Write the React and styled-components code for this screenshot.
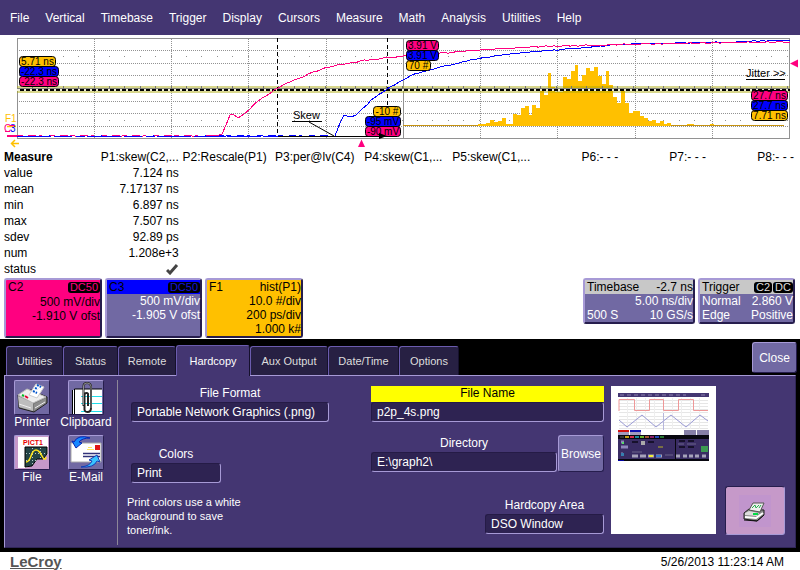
import React from "react";
import styled, { createGlobalStyle } from "styled-components";

const c = {
  purple: "#443672",
  button: "#7169a3",
  light: "#a79ad6",
  edge: "#261d4d",
  field: "#2e2352",
  tab: "#272043",
  pink: "#ff0080",
  blue: "#0000ff",
  gold: "#ffc000",
};

const Global = createGlobalStyle`
  * { box-sizing: border-box; }
  body { margin: 0; background: #fff; color: #000; font: 12px/14px "Liberation Sans", Arial, sans-serif; }
  button, input, select { font: inherit; color: inherit; margin: 0; }
`;

const MenuBar = styled.nav`
  display: flex;
  gap: 16px;
  align-items: center;
  height: 35px;
  padding: 0 10px;
  background: ${c.purple};
`;

const MenuItem = styled.button`
  padding: 0;
  border: 0;
  background: none;
  color: #fff;
`;

const Scope = styled.svg`
  display: block;
  width: 100%;
  height: auto;
  font: 10px "Liberation Sans", Arial, sans-serif;
`;

const MeasureWrap = styled.div`
  padding: 0 6px 0 4px;
  margin-top: -1px;
`;

const MeasureTable = styled.table`
  width: 100%;
  border-collapse: collapse;
  table-layout: fixed;

  th, td {
    height: 16px;
    padding: 0;
    line-height: 16px;
    font-weight: normal;
    text-align: right;
    white-space: nowrap;
  }
  th:first-child { text-align: left; }
  thead th:first-child { font-weight: bold; }
  svg { display: block; margin-left: auto; }
`;

const Descriptors = styled.div`
  display: flex;
  align-items: flex-start;
  gap: 3px;
  padding: 1px 5px 1px 4px;
`;

const Spacer = styled.div`
  flex: 1;
`;

const Box = styled.section`
  width: ${(p) => p.$w}px;
  min-height: ${(p) => p.$h}px;
  border: 2px solid;
  border-color: ${c.light} ${c.edge} ${c.edge} ${c.light};
  border-radius: 3px;
  background: ${(p) => p.$bg};
  color: ${(p) => p.$fg || "#000"};
  line-height: 14px;
`;

const BoxHead = styled.header`
  display: flex;
  align-items: center;
  height: 14px;
  padding: 0 0 0 2px;
  background: ${(p) => p.$bg || "transparent"};
  color: #000;
  margin-bottom: ${(p) => p.$gap || 0}px;

  span:first-child { flex: 1; }
`;

const BoxRow = styled.div`
  display: flex;
  justify-content: space-between;
  padding-left: 2px;
  white-space: nowrap;
`;

const Coupling = styled.b`
  margin-left: 1px;
  padding: 0 2px;
  border-radius: 3px;
  background: #000;
  color: ${(p) => p.$fg || "#ddd"};
  font-size: 11px;
  line-height: 11px;
  font-weight: normal;
`;

const Dialog = styled.main`
  padding: 3px 4px 4px;
  background: #000;
  color: #fff;
`;

const TabRow = styled.div`
  display: flex;
  align-items: flex-end;
  height: 33px;
  padding-left: 2px;
`;

const Tab = styled.button`
  position: relative;
  width: ${(p) => p.$w}px;
  height: ${(p) => (p["aria-selected"] ? 31 : 29)}px;
  margin-bottom: ${(p) => (p["aria-selected"] ? -1 : 0)}px;
  padding: 0 0 ${(p) => (p["aria-selected"] ? 1 : 0)}px;
  border: 1px solid #6b5cae;
  border-width: 1px 1px 0;
  border-right-color: #15102c;
  border-radius: 3px 3px 0 0;
  background: ${(p) => (p["aria-selected"] ? c.purple : c.tab)};
  color: ${(p) => (p["aria-selected"] ? "#fff" : "#ddd")};
  font-size: 11px;
`;

const PushButton = styled.button`
  display: flex;
  align-items: center;
  justify-content: center;
  width: ${(p) => p.$w}px;
  height: ${(p) => p.$h}px;
  padding: 0;
  border: 1px solid;
  border-color: ${(p) => (p.$lit ? `${c.edge} ${c.light} ${c.light} ${c.edge}` : `${c.light} ${c.edge} ${c.edge} ${c.light}`)};
  border-radius: 3px;
  background: ${(p) => (p.$lit ? "#c699c9" : c.button)};
  color: #fff;
`;

const CloseSlot = styled.div`
  align-self: flex-start;
  margin-left: auto;
  margin-right: -1px;
`;

const Panel = styled.div`
  display: flex;
  border: 1px solid ${c.light};
  border-right-color: #302657;
  border-bottom-color: #302657;
  background: ${c.purple};
`;

const Targets = styled.div`
  display: grid;
  grid-template-columns: 54px 54px;
  align-content: start;
  row-gap: 5px;
  width: 113px;
  margin: 4px 0 2px;
  border-right: 1px solid #8d8798;
`;

const Target = styled.button`
  display: flex;
  flex-direction: column;
  align-items: center;
  height: 50px;
  padding: 0;
  border: 0;
  background: none;
  color: #fff;
`;

const TargetFace = styled.span`
  width: 36px;
  height: 35px;
  border: 1px solid;
  border-color: ${c.light} ${c.edge} ${c.edge} ${c.light};
  border-radius: 2px;
  background: ${(p) => (p.$on ? "#c699c9" : c.button)};

  svg { display: block; }
`;

const Column = styled.div`
  display: flex;
  flex-direction: column;
  padding-top: 10px;
`;

const FormatColumn = styled(Column)`
  width: 198px;
  margin: 0 42px 0 13px;
`;

const FileColumn = styled(Column)`
  flex: 1;
  min-width: 180px;
`;

const Field = styled.div`
  display: flex;
  flex-direction: column;
  width: ${(p) => (p.$w ? `${p.$w}px` : "auto")};
  flex: ${(p) => (p.$grow ? 1 : "none")};
  margin-top: ${(p) => p.$top || 0}px;
  align-self: ${(p) => (p.$end ? "flex-end" : "auto")};
`;

const FieldLabel = styled.label`
  height: 16px;
  line-height: 15px;
  text-align: center;
  background: ${(p) => (p.$on ? "#ffff00" : "transparent")};
  color: ${(p) => (p.$on ? "#000" : "#fff")};
`;

const fieldBox = `
  width: 100%;
  height: 20px;
  padding: 0 5px 1px;
  border: 1px solid;
  border-radius: 3px;
  appearance: none;
  outline: none;
`;

const TextInput = styled.input`
  ${fieldBox}
  border-color: #251b46 ${c.light} ${c.light} #251b46;
  background: ${c.field};
`;

const Drop = styled.select`
  ${fieldBox}
  border-color: #251b46 ${c.light} ${c.light} #251b46;
  background: ${c.field};
`;

const DirectoryRow = styled.div`
  display: flex;
  align-items: flex-end;
  gap: 1px;
  margin-top: 13px;
`;

const Note = styled.p`
  width: 140px;
  margin: 12px 0 0 -4px;
  font-size: 11px;
  line-height: 14px;
`;

const Preview = styled.figure`
  width: 105px;
  height: 148px;
  margin: 10px 0 0 7px;
  padding: 7px;
  background: #fff;

  svg { display: block; }
`;

const PrintSlot = styled.div`
  padding-top: 110px;
  margin: 0 10px 12px 9px;
`;

const Footer = styled.footer`
  display: flex;
  justify-content: space-between;
  align-items: center;
  padding: 0 16px 0 10px;
  height: 19px;
`;

const Brand = styled.b`
  color: #555;
  font-size: 15px;
  line-height: 16px;
  text-decoration: underline;
`;

const jitter = (i) => ((i * 7919) % 13) / 13 - 0.5;

function trace(points, noise) {
  const out = [];
  points.forEach(([x, y], i) => {
    out.push(`${x},${y}`);
    const next = points[i + 1];
    if (!next) return;
    for (let px = x + 4; px < next[0] - 2; px += 4) {
      const base = y + ((next[1] - y) * (px - x)) / (next[0] - x);
      out.push(`${px},${(base + jitter(px) * noise).toFixed(1)}`);
    }
  });
  return out.join(" ");
}

const pinkTrace = trace([[17, 136], [215, 136], [222, 134], [226, 125], [230, 115], [233, 114], [238, 118], [244, 114], [250, 109], [258, 101], [266, 96], [278, 88], [290, 82], [300, 78], [313, 72], [330, 67], [345, 64], [360, 61], [387, 58], [403, 56], [440, 53], [460, 52], [480, 50], [500, 49], [530, 47], [600, 45], [650, 44], [700, 43], [790, 42]], 1.4);
const blueTrace = trace([[17, 136], [335, 136], [340, 123], [344, 115], [351, 117], [356, 115], [362, 109], [368, 104], [371, 100], [387, 89], [403, 80], [412, 75], [430, 70], [440, 67], [455, 64], [470, 60], [490, 57], [510, 54], [530, 52], [570, 49], [600, 46], [625, 44], [680, 43], [730, 42], [790, 40]], 1);

const bars = [
  [478, 124], [486, 123], [490, 120], [494, 122], [498, 121], [502, 118], [506, 124], [513, 114], [517, 115], [521, 108], [525, 106], [529, 115],
  [532, 105], [536, 108], [540, 90], [544, 95], [548, 73], [551, 87], [555, 92], [563, 77], [567, 79], [571, 71], [575, 65], [578, 81], [582, 75],
  [586, 68], [590, 71], [594, 67], [598, 76], [602, 84], [606, 71], [609, 85], [613, 97], [617, 103], [621, 91], [625, 103], [629, 113],
  [633, 111], [640, 116], [644, 118], [648, 121], [652, 120], [656, 123], [660, 121], [664, 124], [667, 123], [671, 126],
];
const histogram = `M478 126${bars.map(([x, y], i) => `V${y}H${bars[i + 1] ? bars[i + 1][0] : 671}`).join("")}Z`;

function Tag({ x, y, w, fill, children }) {
  return (
    <g>
      <rect x={x + 0.5} y={y + 0.5} width={w - 1} height="10" rx="3" fill={fill} stroke="#000" />
      <text x={x + w / 2} y={y + 9} textAnchor="middle">{children}</text>
    </g>
  );
}

function ScopeGrid() {
  const columns = [94, 171, 248, 326, 480, 557, 635, 712];
  const rows = [50, 63, 75, 101, 113, 126];
  return (
    <Scope viewBox="0 35 800 115" role="img" aria-label="Waveform grid">
      <g shapeRendering="crispEdges">
        <rect x="17.5" y="38.5" width="772" height="100" fill="none" stroke="#929292" />
        <path d="M403.5 39V138" stroke="#929292" />
        {columns.map((x) => <path key={x} d={`M${x}.5 39V138`} stroke="#929292" strokeDasharray="1 1" />)}
        {rows.map((y) => <path key={y} d={`M19 ${y}.5H789`} stroke="#929292" strokeDasharray="1 1" />)}
        <path d="M32 56.5H789M32 120.5H789" stroke="#929292" strokeDasharray="1 14.4" />
        <path d="M403 125.5H784" stroke="#c69210" />
        <path d={histogram} fill={c.gold} />
        <path d="M687 124.5H694M710 124.5H714" stroke={c.gold} />
        <path d="M17 87H790M17 92H790" stroke="#a8a600" strokeOpacity=".45" strokeWidth="2" />
        <path d="M17 88.5H790" stroke="#85857d" />
        <path d="M32 87.5H789" stroke="#777" strokeWidth="3" strokeDasharray="1 14.4" />
        <path d="M17 90H790" stroke="#f1f1d9" strokeWidth="2" />
        <path d="M20 90H790" stroke="#000" strokeWidth="2" strokeDasharray="4 2" />
        <path d="M277.5 38V136M387.5 38V136" stroke="#000" strokeDasharray="4 3" />
        <polyline points={blueTrace} fill="none" stroke={c.blue} />
        <polyline points={pinkTrace} fill="none" stroke={c.pink} />
        <path d="M17 136.5H333" stroke={c.blue} strokeDasharray="34 3 18 4 9 2" />
      </g>
      <Tag x={19} y={56} w={37} fill={c.gold}>5.71 ns</Tag>
      <Tag x={19} y={66} w={40} fill={c.blue}>-22.3 ns</Tag>
      <Tag x={19} y={76} w={40} fill={c.pink}>-22.3 ns</Tag>
      <Tag x={406} y={40} w={33} fill={c.pink}>3.91 V</Tag>
      <Tag x={406} y={50} w={33} fill={c.blue}>3.91 V</Tag>
      <Tag x={406} y={60} w={25} fill={c.gold}>70 #</Tag>
      <Tag x={373} y={106} w={28} fill={c.gold}>-10 #</Tag>
      <Tag x={365} y={116} w={36} fill={c.blue}>-95 mV</Tag>
      <Tag x={365} y={126} w={36} fill={c.pink}>-90 mV</Tag>
      <Tag x={751} y={90} w={37} fill={c.pink}>27.7 ns</Tag>
      <Tag x={751} y={100} w={37} fill={c.blue}>27.7 ns</Tag>
      <Tag x={751} y={110} w={37} fill={c.gold}>7.71 ns</Tag>
      <text x="293" y="119" fontSize="11">Skew</text>
      <path d="M292 121.5H322M309 122L334 136M278 136.5H382" fill="none" stroke="#000" />
      <path d="M379 133V139L387 136Z" />
      <text x="746" y="77" fontSize="11">Jitter &gt;&gt;</text>
      <path d="M746 79.5H785" stroke="#000" />
      <path d="M358 147L361.500 139.500L365 147Z" fill={c.pink} />
      <path d="M790 63.500L798 59.500V67.500Z" fill={c.pink} />
      <text x="5" y="122" fill={c.gold}>F1</text>
      <path d="M7 126.500H16M19 143.500H11M15 140L11.500 143.500L15 147" fill="none" stroke={c.gold} strokeWidth="1.500" />
      <text x="4" y="132" fill={c.pink}>C</text>
      <text x="10" y="132" fill={c.blue}>3</text>
      <path d="M10 125.500H15M5 131.500H10" stroke={c.pink} />
      <path d="M7 136H17" stroke={c.pink} strokeWidth="2" />
    </Scope>
  );
}

function PrinterIcon() {
  return (
    <svg width="34" height="33" viewBox="0 0 34 33" aria-hidden="true">
      <path d="M3 14L16 9L32 16V22L19 31L4 27Z" fill="#777" stroke="#222" />
      <path d="M3 14L12 8L31 16L18 22Z" fill="#eee" stroke="#bbb" />
      <path d="M14 14L21 3L29 6L22 17Z" fill="#fff" stroke="#ccc" />
      <path d="M20 7L23 8M22 4L26 6M18 10L22 12" stroke="#0055cc" strokeWidth="2" strokeDasharray="2 1" />
      <path d="M3 15L18 22V30L4 26Z" fill="#bdbdbd" />
      <path d="M19 23L31 17V22L19 30Z" fill="#8d8d8d" />
      <path d="M4 23L16 27M20 27L30 21" stroke="#eee" />
      <path d="M7 14L9 15" stroke="#00ba22" strokeWidth="2" />
      <path d="M10 15L13 17" stroke="#e00030" strokeWidth="2" />
    </svg>
  );
}

function ClipboardIcon() {
  return (
    <svg width="34" height="33" viewBox="0 0 34 33" aria-hidden="true">
      <path d="M3 9H5V8H33V33H3Z" fill="#fff" />
      <path d="M3.500 33V9M5.500 33V8H33" fill="none" stroke="#000" />
      <path d="M12 15.500H33M12 22.500H33M12 30.500H33" stroke="#20ddeb" />
      <path d="M14.500 25V5Q14.500 2 18 2T22 5V27Q22 31 18.500 31T15.500 27V14Q15.500 12 17.500 12T19 14V25" fill="none" stroke="#222" strokeWidth="2" />
      <path d="M14.500 24V5Q14.500 2 18 2T22 5V27" fill="none" stroke="#aaa" strokeWidth=".8" />
    </svg>
  );
}

function PictureIcon() {
  return (
    <svg width="34" height="33" viewBox="0 0 34 33" aria-hidden="true">
      <path d="M3 1H33V18L28 22L23 23L17 30L10 32H3Z" fill="#fff" />
      <path d="M10 11H32V18L28 23L22 23L17 30L10 31Z" fill="#244445" stroke="#000" />
      <path d="M17.500 12V29M25.500 12V23M11 17.500H31M11 24.500H23" stroke="#b4caca" strokeDasharray="1 2" />
      <path d="M11 26Q14 26 16 20T21 14T27 20T31 21" fill="none" stroke="#ffe51a" strokeWidth="1.500" />
      <text x="18" y="9" fill="#e60000" fontFamily="Liberation Sans" fontWeight="bold" fontSize="7" textAnchor="middle">PICT1</text>
    </svg>
  );
}

function MailIcon() {
  return (
    <svg width="34" height="33" viewBox="0 0 34 33" aria-hidden="true">
      <path d="M2 7H32V26H2Z" fill="#fff" stroke="#aaa" />
      <rect x="26" y="9" width="5" height="5" fill="#e01515" />
      <path d="M19 11.500H23M18 13.500H25" stroke="#ffe760" />
      <path d="M14 17.500H31M14 20.500H31" stroke="#31337b" strokeWidth="1.500" />
      <path d="M3 5L7 12L13 7L10 6Q13 2 21 2Q9 -2 5 6Z" fill="#1688ff" stroke="#0824b3" />
      <path d="M20 24L28 19L31 26L28 25Q25 32 12 31Q21 30 23 25Z" fill="#39c4ff" stroke="#143bb5" />
    </svg>
  );
}

function PrintNowIcon() {
  return (
    <svg width="32" height="32" viewBox="0 0 32 32" aria-hidden="true">
      <rect width="32" height="32" fill="#c195cd" />
      <path d="M5 18L10 14L25 15V20L18 26L5 24Z" fill="#888" stroke="#222" />
      <path d="M10 15L14 8H25L21 17Z" fill="#eee" stroke="#555" />
      <path d="M13 13L16 10L17 13L20 10M20 13L22 10" fill="none" stroke="#27ae50" />
      <path d="M6 18L10 16L20 18L18 21L6 20Z" fill="#ddd" />
      <path d="M6 22L17 23L24 18" fill="none" stroke="#fff" strokeWidth="2" />
      <path d="M14 19H19" stroke="#00dc45" strokeWidth="2" />
      <path d="M5 25L18 26L25 20" fill="none" stroke="#111" />
    </svg>
  );
}

function Thumbnail() {
  const chips = ["#333", "#c6a316", "#d62c4e", "#198999", "#6ab22d", "#a25531", "#8b1e68", "#2448b8", "#277532"];
  return (
    <svg width="91" height="68" viewBox="0 0 91 68" role="img" aria-label="Hardcopy preview">
      <rect width="91" height="68" fill="#fff" />
      <rect width="91" height="4" fill="#443672" />
      <path d="M2 2H68M83 2H90" stroke="#8b80ad" strokeDasharray="4 3" />
      {[7, 10, 13, 16, 19, 23, 26, 29, 32, 35].map((y) => <path key={y} d={`M1 ${y}.5H90`} stroke="#e6e6e6" />)}
      {[9, 18, 27, 36, 45, 54, 63, 72, 81].map((x) => <path key={x} d={`M${x}.5 5V36`} stroke="#eee" />)}
      <path d="M1 18V6.500H16.500V17.500H31.500V6.500H45.500V17.500H60.500V6.500H75.500V17.500H90" fill="none" stroke="#ee9898" />
      <path d="M1 27L9 34L24 22L38 34L53 22L68 34L82 22L90 28" fill="none" stroke="#9b9bd6" />
      <path d="M45.500 20V37" stroke="#b6b6dc" />
      <rect y="37" width="11" height="2" fill="#d31212" />
      <rect x="12" y="37" width="11" height="2" fill="#1111b0" />
      <path d="M0 39H11V42H0ZM12 39H23V42H12Z" fill="#a39bbf" />
      <path d="M66 37H78V42H66ZM79 37H91V42H79Z" fill="#8780a8" />
      <rect y="42" width="91" height="26" fill="#080710" />
      <rect y="46" width="57" height="20" fill="#392c63" />
      <rect x="58" y="46" width="33" height="20" fill="#392c63" />
      {chips.map((fill, i) => <rect key={fill} x={2 + i * 5} y="43" width="4" height="2" fill={fill} />)}
      <path d="M14 49H20M30 49H36M61 48H67M70 48H76M61 54H67M70 54H76" stroke="#17112c" strokeWidth="2" />
      <path d="M60 51H66M69 51H78M14 59H24M47 62H55" stroke="#6d648c" />
      <rect x="23" y="48" width="4" height="4" fill="#aaa" />
      <path d="M3 49H6M3 54H10M3 61H5" stroke="#8f86bb" strokeWidth="3" />
      <rect x="4" y="49" width="2" height="2" fill="#55dd69" />
      <rect x="3" y="60" width="3" height="3" fill="#367fb0" />
      <path d="M14 63H20M22 63H28M30 63H36M38 63H44M58 63H62M65 63H69M71 63H75M77 63H81M84 63H88" stroke="#a6a2ba" strokeWidth="3" />
      <rect x="31" y="62" width="4" height="2" fill="#f0ed35" />
      <rect x="38" y="62" width="5" height="2" fill="#3478d2" />
      <path d="M40 54H45" stroke="#b9b127" />
      <rect x="83" y="53" width="7" height="6" fill="#3c9952" />
      <rect y="67" width="6" height="1" fill="#0000a0" />
    </svg>
  );
}

const measures = [
  ["value", "7.124 ns"], ["mean", "7.17137 ns"], ["min", "6.897 ns"], ["max", "7.507 ns"],
  ["sdev", "92.89 ps"], ["num", "1.208e+3"],
];
const headings = ["P1:skew(C2,...", "P2:Rescale(P1)", "P3:per@lv(C4)", "P4:skew(C1,...", "P5:skew(C1,...", "P6:- - -", "P7:- - -", "P8:- - -"];
const menus = ["File", "Vertical", "Timebase", "Trigger", "Display", "Cursors", "Measure", "Math", "Analysis", "Utilities", "Help"];
const tabs = [["Utilities", 57], ["Status", 55], ["Remote", 58], ["Hardcopy", 74], ["Aux Output", 78], ["Date/Time", 71], ["Options", 60]];
const targets = [["Printer", PrinterIcon], ["Clipboard", ClipboardIcon], ["File", PictureIcon], ["E-Mail", MailIcon]];

export default function App() {
  return (
    <>
      <Global />
      <MenuBar>{menus.map((m) => <MenuItem key={m}>{m}</MenuItem>)}</MenuBar>
      <ScopeGrid />
      <MeasureWrap>
        <MeasureTable>
          <colgroup>
            <col width="11%" />
            {headings.map((h) => <col key={h} />)}
          </colgroup>
          <thead>
            <tr><th scope="col">Measure</th>{headings.map((h) => <th key={h} scope="col">{h}</th>)}</tr>
          </thead>
          <tbody>
            {measures.map(([name, value]) => (
              <tr key={name}><th scope="row">{name}</th><td>{value}</td><td colSpan="7" /></tr>
            ))}
            <tr>
              <th scope="row">status</th>
              <td>
                <svg width="13" height="12" viewBox="0 0 13 12" role="img" aria-label="OK">
                  <path d="M1 7L4 10L11 2" fill="none" stroke="#444" strokeWidth="3" />
                </svg>
              </td>
              <td colSpan="7" />
            </tr>
          </tbody>
        </MeasureTable>
      </MeasureWrap>

      <Descriptors>
        <Box $w={98} $h={60} $bg={c.pink}>
          <BoxHead $gap={1}><span>C2</span><Coupling $fg={c.pink}>DC50</Coupling></BoxHead>
          <BoxRow><span /><span>500 mV/div</span></BoxRow>
          <BoxRow><span /><span>-1.910 V ofst</span></BoxRow>
        </Box>
        <Box $w={97} $h={60} $bg={c.button} $fg="#fff">
          <BoxHead $bg={c.blue}><span>C3</span><Coupling $fg="#1515d8">DC50</Coupling></BoxHead>
          <BoxRow><span /><span>500 mV/div</span></BoxRow>
          <BoxRow><span /><span>-1.905 V ofst</span></BoxRow>
        </Box>
        <Box $w={98} $h={60} $bg={c.gold}>
          <BoxHead><span>F1</span><span>hist(P1)</span></BoxHead>
          <BoxRow><span /><span>10.0 #/div</span></BoxRow>
          <BoxRow><span /><span>200 ps/div</span></BoxRow>
          <BoxRow><span /><span>1.000 k#</span></BoxRow>
        </Box>
        <Spacer />
        <Box $w={112} $h={46} $bg={c.button} $fg="#fff">
          <BoxHead $bg="#c8c8c8"><span>Timebase</span><span>-2.7 ns</span></BoxHead>
          <BoxRow><span /><span>5.00 ns/div</span></BoxRow>
          <BoxRow><span>500 S</span><span>10 GS/s</span></BoxRow>
        </Box>
        <Box $w={97} $h={46} $bg={c.button} $fg="#fff">
          <BoxHead $bg="#c8c8c8"><span>Trigger</span><Coupling>C2</Coupling><Coupling>DC</Coupling></BoxHead>
          <BoxRow><span>Normal</span><span>2.860 V</span></BoxRow>
          <BoxRow><span>Edge</span><span>Positive</span></BoxRow>
        </Box>
      </Descriptors>

      <Dialog>
        <TabRow role="tablist">
          {tabs.map(([name, w]) => (
            <Tab key={name} role="tab" aria-selected={name === "Hardcopy"} $w={w}>{name}</Tab>
          ))}
          <CloseSlot><PushButton $w={45} $h={31}>Close</PushButton></CloseSlot>
        </TabRow>
        <Panel>
          <Targets>
            {targets.map(([name, Icon]) => (
              <Target key={name} aria-pressed={name === "File"}>
                <TargetFace $on={name === "File"}><Icon /></TargetFace>
                {name}
              </Target>
            ))}
          </Targets>
          <FormatColumn>
            <Field>
              <FieldLabel htmlFor="format">File Format</FieldLabel>
              <Drop id="format"><option>Portable Network Graphics (.png)</option></Drop>
            </Field>
            <Field $w={90} $top={25}>
              <FieldLabel htmlFor="colors">Colors</FieldLabel>
              <Drop id="colors"><option>Print</option></Drop>
            </Field>
            <Note>Print colors use a white background to save toner/ink.</Note>
          </FormatColumn>
          <FileColumn>
            <Field>
              <FieldLabel htmlFor="file" $on>File Name</FieldLabel>
              <TextInput id="file" defaultValue="p2p_4s.png" />
            </Field>
            <DirectoryRow>
              <Field $grow>
                <FieldLabel htmlFor="directory">Directory</FieldLabel>
                <TextInput id="directory" defaultValue={"E:\\graph2\\"} />
              </Field>
              <PushButton $w={46} $h={37}>Browse</PushButton>
            </DirectoryRow>
            <Field $w={119} $top={26} $end>
              <FieldLabel htmlFor="area">Hardcopy Area</FieldLabel>
              <Drop id="area"><option>DSO Window</option></Drop>
            </Field>
          </FileColumn>
          <Preview><Thumbnail /></Preview>
          <PrintSlot>
            <PushButton $w={60} $h={49} $lit aria-label="Print now"><PrintNowIcon /></PushButton>
          </PrintSlot>
        </Panel>
      </Dialog>
      <Footer><Brand>LeCroy</Brand><time dateTime="2013-05-26T11:23:14">5/26/2013 11:23:14 AM</time></Footer>
    </>
  );
}
